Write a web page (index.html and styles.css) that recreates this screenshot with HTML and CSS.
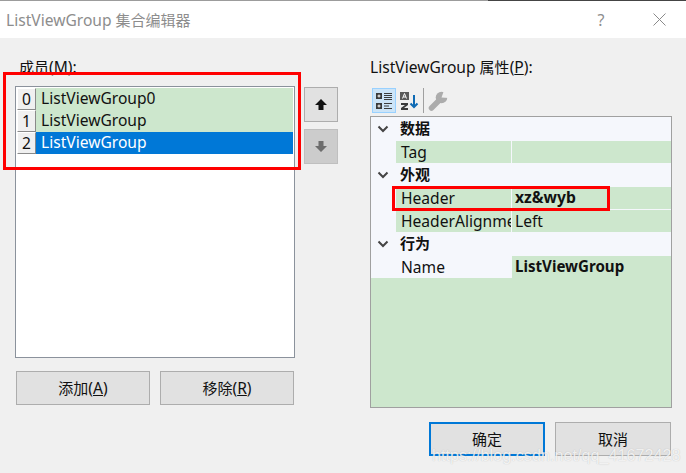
FILE: index.html
```html
<!DOCTYPE html>
<html lang="zh">
<head>
<meta charset="utf-8">
<title>ListViewGroup 集合编辑器</title>
<link rel="stylesheet" href="styles.css">
</head>
<body>
<div class="window">
  <div class="topline"><span class="tl-a"></span><span class="tl-b"></span></div>
  <header class="titlebar">
    <span class="title">ListViewGroup <span class="cjk">集合编辑器</span></span>
    <span class="help">?</span>
    <svg class="close" width="13" height="13" viewBox="0 0 13 13"><path d="M.5.5l12 12M12.500.5l-12 12" stroke="#8a8a8a" fill="none"/></svg>
  </header>
  <main class="content">
    <section class="left">
      <div class="label"><span class="cjk">成员</span>(<u>M</u>):</div>
      <div class="list-row">
        <div class="list">
          <div class="item"><span class="idx">0</span><span class="item-text">ListViewGroup0</span></div>
          <div class="item"><span class="idx">1</span><span class="item-text">ListViewGroup</span></div>
          <div class="item selected"><span class="idx">2</span><span class="item-text">ListViewGroup</span></div>
        </div>
        <div class="arrows">
          <button class="arrow"><svg width="14" height="13" viewBox="0 0 14 13"><path d="M7 1l6 6H9.500v5h-5V7H1z" fill="#111"/></svg></button>
          <button class="arrow disabled"><svg width="14" height="13" viewBox="0 0 14 13"><path d="M7 12L1 6h3.500V1h5v5H13z" fill="#6d6d6d"/></svg></button>
        </div>
      </div>
      <div class="left-buttons">
        <button class="btn small"><span class="cjk">添加</span>(<u>A</u>)</button>
        <button class="btn small"><span class="cjk">移除</span>(<u>R</u>)</button>
      </div>
    </section>
    <section class="right">
      <div class="label">ListViewGroup <span class="cjk">属性</span>(<u>P</u>):</div>
      <div class="toolbar">
        <span class="tool active">
          <svg width="20" height="20" viewBox="0 0 20 20">
            <path d="M2 2h6v6H2zM2 12h6v6H2z" fill="#3b3b3b"/>
            <path d="M3.500 5h3M5 3.500v3M3.500 15h3M5 13.500v3" stroke="#fff"/>
            <path d="M10 2.500h8M10 4.500h8M10 6.500h8M10 8.500h8M10 12.500h8M10 15h5M10 17.500h8" stroke="#3b3b3b"/>
          </svg>
        </span>
        <span class="tool">
          <svg width="20" height="22" viewBox="0 0 20 22">
            <path d="M1 2h9v8H1z" fill="#5a5a5a"/>
            <path d="M3.500 8.500l2-5 2 5M4.300 7h2.400" stroke="#fff" fill="none"/>
            <path d="M2 13h7v2l-4 3h4v2H2v-2l4-3H2z" fill="#3b3b3b"/>
            <path d="M15 5v12M11.500 13.500L15 17l3.500-3.500" stroke="#0e6ab4" stroke-width="2" fill="none"/>
          </svg>
        </span>
        <span class="tool-sep"></span>
        <span class="tool">
          <svg width="22" height="22" viewBox="0 0 22 22">
            <path d="M4.500 18L12 10.500" stroke="#acacac" stroke-width="5.500" stroke-linecap="round"/>
            <circle cx="14.500" cy="7.500" r="5.800" fill="#acacac"/>
            <path d="M14.500 7.500L17 .5 23 1l-1 7z" fill="#f0f0f0"/>
          </svg>
        </span>
      </div>
      <div class="grid">
        <div class="cat"><svg class="chev" width="12" height="8" viewBox="0 0 12 8"><path d="M1.500 1.500L6 6l4.500-4.500" stroke="#444" stroke-width="2" fill="none"/></svg><span>数据</span></div>
        <div class="prop"><span class="name">Tag</span><span class="val"></span></div>
        <div class="cat"><svg class="chev" width="12" height="8" viewBox="0 0 12 8"><path d="M1.500 1.500L6 6l4.500-4.500" stroke="#444" stroke-width="2" fill="none"/></svg><span>外观</span></div>
        <div class="prop"><span class="name">Header</span><span class="val bold header-val">xz&amp;wyb</span></div>
        <div class="prop"><span class="name">HeaderAlignment</span><span class="val">Left</span></div>
        <div class="cat"><svg class="chev" width="12" height="8" viewBox="0 0 12 8"><path d="M1.500 1.500L6 6l4.500-4.500" stroke="#444" stroke-width="2" fill="none"/></svg><span>行为</span></div>
        <div class="prop"><span class="name plain">Name</span><span class="val bold">ListViewGroup</span></div>
      </div>
      <div class="right-buttons">
        <button class="btn wide default"><span class="cjk">确定</span></button>
        <button class="btn wide"><span class="cjk">取消</span></button>
      </div>
    </section>
  </main>
</div>
<div class="mark mark-list"></div>
<div class="mark mark-header"></div>
<div class="watermark">https://blog.csdn.net/qq_41672428</div>
</body>
</html>
```
FILE: styles.css
```css
* { box-sizing: border-box; }
html, body { margin: 0; padding: 0; }
body {
  position: relative;
  width: 686px;
  height: 473px;
  overflow: hidden;
  background: #f0f0f0;
  color: #111;
  font: 15.6px/20px "Noto Sans", "Noto Sans CJK SC", sans-serif;
}
.cjk { font-size: 15px; }
.window { display: flex; flex-direction: column; height: 473px; }
.topline { display: flex; height: 1px; flex: none; }
.tl-a { width: 488px; background: #9c9c9c; }
.tl-b { flex: 1; background: #444; }
.titlebar {
  display: flex;
  align-items: center;
  height: 37px;
  flex: none;
  padding: 0 20px 0 6px;
  background: #fff;
}
.title { flex: 1; color: #8d8d8d; }
.help { width: 14px; margin-right: 45px; color: #8d8d8d; font-size: 16px; text-align: center; }
.close { display: block; }
.content { display: flex; flex: 1; padding-top: 19px; }
.left { width: 370px; padding-left: 15px; flex: none; }
.right { flex: 1; }
.label { height: 29px; padding-left: 4px; line-height: 20px; }
.right .label { padding-left: 0; height: 31px; }
.list-row { display: flex; }
.list {
  width: 280px;
  height: 272px;
  padding: 1px;
  background: #fff;
  border: 1px solid #8b929c;
  flex: none;
}
.item { display: flex; height: 22px; background: #cde7cd; }
.item.selected { background: #0078d7; color: #fff; }
.idx {
  width: 19px;
  margin-right: 5px;
  background: #f0f0f0;
  border: 1px solid;
  border-color: #fff #8a8a8a #8a8a8a #fff;
  color: #111;
  text-align: center;
  line-height: 20px;
}
.item-text { line-height: 21px; }
.arrows { display: flex; flex-direction: column; gap: 7px; margin-left: 9px; padding-top: 1px; }
.arrow {
  display: flex;
  align-items: center;
  justify-content: center;
  width: 34px;
  height: 35px;
  padding: 0;
  background: #e1e1e1;
  border: 1px solid #adadad;
}
.arrow.disabled { background: #cccccc; border-color: #bfbfbf; }
.btn {
  padding: 0;
  background: #e1e1e1;
  border: 1px solid #adadad;
  color: #111;
  font: inherit;
}
.left-buttons { display: flex; gap: 10px; margin-top: 13px; padding-left: 1px; }
.btn.small { width: 134px; height: 34px; }
.toolbar { display: flex; align-items: center; height: 25px; margin: 0 0 3px; padding-left: 2px; }
.tool { display: flex; align-items: center; justify-content: center; width: 25px; height: 25px; }
.tool.active { width: 24px; background: #cce4f7; border: 1px solid #99d1ff; }
.tool-sep { width: 1px; height: 25px; margin: 0 1px 0 2px; background: #a0a0a0; }
.grid {
  display: flex;
  flex-direction: column;
  width: 302px;
  height: 292px;
  background: #cde7cd;
  border: 1px solid #a0a0a0;
}
.cat {
  display: flex;
  align-items: center;
  height: 24px;
  flex: none;
  background: #f5f7fc;
  font-weight: 700;
  font-size: 15px;
}
.chev { margin: 0 11px 0 6px; flex: none; }
.cat span { padding-bottom: 2px; }
.prop { display: flex; height: 22px; flex: none; padding-left: 25px; background: #f5f7fc; }
.prop + .prop { height: 23px; padding-top: 1px; }
.name {
  width: 115px;
  padding-left: 5px;
  overflow: hidden;
  margin-right: 1px;
  height: 22px;
  background: #cde7cd;
  white-space: nowrap;
  line-height: 22px;
}
.name.plain { background: #f5f7fc; margin-right: 0; width: 116px; }
.val { flex: 1; height: 22px; padding-left: 3px; background: #cde7cd; line-height: 22px; }
.bold { font-weight: 700; font-size: 15.1px; line-height: 21px; }
.header-val { font-size: 15.7px; }
.right-buttons { display: flex; gap: 10px; margin-top: 14px; padding-left: 59px; }
.btn.wide { width: 116px; height: 34px; }
.btn.default { border: 2px solid #0078d7; }
.mark { position: absolute; border: 3px solid #f00; }
.mark-list { left: 3px; top: 72px; width: 298px; height: 98px; }
.mark-header { left: 392px; top: 186px; width: 218px; height: 25px; }
.watermark {
  position: absolute;
  left: 432px;
  top: 445px;
  color: rgba(255, 255, 255, .8);
  font: 16.2px/20px "Liberation Sans", sans-serif;
  text-shadow: 0 0 1px rgba(120, 120, 120, .45);
  white-space: nowrap;
}
```
